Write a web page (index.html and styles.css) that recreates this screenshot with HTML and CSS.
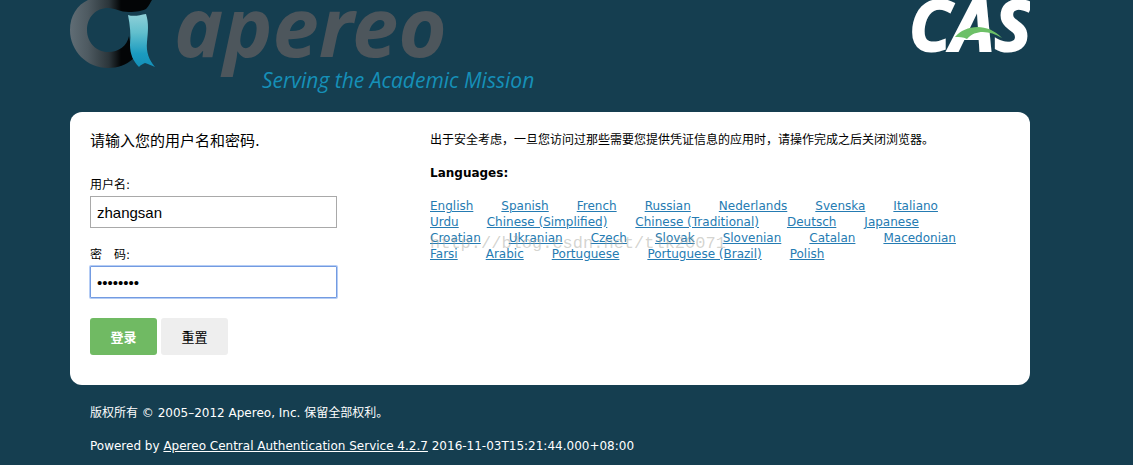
FILE: index.html
```
<!DOCTYPE html>
<html lang="zh-CN">

<head>
  <meta charset="UTF-8" />
  <meta name="viewport" content="width=device-width, initial-scale=1.0" />
  <title>CAS &#8211; Central Authentication Service</title>
  <link rel="stylesheet" href="styles.css">
</head>

<body>
  <div class="container">
    <header class="header">
      <svg class="logo" width="480" height="96" viewBox="0 0 480 96" role="img" aria-label="Apereo">
        <defs>
          <linearGradient id="ring" gradientUnits="userSpaceOnUse" x1="0" y1="0" x2="60" y2="0">
            <stop offset="0" stop-color="#606d75" />
            <stop offset="0.3" stop-color="#4e5a61" />
            <stop offset="0.65" stop-color="#2b353a" />
            <stop offset="0.85" stop-color="#030506" />
          </linearGradient>
          <linearGradient id="ribbon" x1="0" y1="0" x2="0" y2="1">
            <stop offset="0" stop-color="#8fd0d8" />
            <stop offset="0.35" stop-color="#62bfcd" />
            <stop offset="0.75" stop-color="#1b9bc0" />
            <stop offset="1" stop-color="#138fb8" />
          </linearGradient>
        </defs>
        <path fill="url(#ring)" d="M18 0C7 5 0 16 0 30C0 51 17 68 38 68C48 68 56 65 63 59L59 36C57 46 49 52 38 52C26 52 17 42 17 30C17 17 26 8 38 8C45 8 50 12 59 12C67 12 72 11 76 9C79 6 80 3 82 0Z" />
        <path fill="url(#ribbon)" d="M58 15C64 17 70 15 76 14C79 23 78 32 77 42C76 52 79 60 85 67C81 65 78 64 75 63C73 64 70 65 69 67C63 61 60 54 60 45C61 35 60 25 58 15Z" />
        <text class="logo-name" x="104" y="57">apereo</text>
        <text class="logo-tagline" x="192" y="88">Serving the Academic Mission</text>
      </svg>
      <svg class="cas" width="120" height="56" viewBox="0 0 120 56" role="img" aria-label="CAS">
        <text class="cas-name" x="-1" y="51">CAS</text>
        <path fill="#6dc067" d="M45 37C55 25 77 22 92 38C80 31 66 29 57 39C53 37 49 37 45 37Z" />
      </svg>
    </header>

    <main class="content">
      <form class="login">
        <h2 class="title">请输入您的用户名和密码.</h2>
        <div class="row">
          <label for="username">用户名:</label>
          <input type="text" class="input" id="username" value="zhangsan">
        </div>
        <div class="row">
          <label for="password">密&emsp;码:</label>
          <input type="password" class="input active" id="password" value="zhangsan">
        </div>
        <div class="buttons">
          <button type="submit" class="btn btn-submit">登录</button>
          <button type="reset" class="btn">重置</button>
        </div>
      </form>

      <div class="sidebar">
        <p class="notice">出于安全考虑，一旦您访问过那些需要您提供凭证信息的应用时，请操作完成之后关闭浏览器。</p>
        <h3 class="languages-title">Languages:</h3>
        <div class="languages">
          <div class="line"><a href="#">English</a><a href="#">Spanish</a><a href="#">French</a><a href="#">Russian</a><a href="#">Nederlands</a><a href="#">Svenska</a><a href="#">Italiano</a></div>
          <div class="line"><a href="#">Urdu</a><a href="#">Chinese (Simplified)</a><a href="#">Chinese (Traditional)</a><a href="#">Deutsch</a><a href="#">Japanese</a></div>
          <div class="line"><a href="#">Croatian</a><a href="#">Ukranian</a><a href="#">Czech</a><a href="#">Slovak</a><a href="#">Slovenian</a><a href="#">Catalan</a><a href="#">Macedonian</a></div>
          <div class="line"><a href="#">Farsi</a><a href="#">Arabic</a><a href="#">Portuguese</a><a href="#">Portuguese (Brazil)</a><a href="#">Polish</a></div>
          <span class="watermark">http://blog.csdn.net/tlk20071</span>
        </div>
      </div>
    </main>

    <footer class="footer">
      <p>版权所有 &copy; 2005&ndash;2012 Apereo, Inc. 保留全部权利。</p>
      <p>Powered by <a href="#">Apereo Central Authentication Service 4.2.7</a> 2016-11-03T15:21:44.000+08:00</p>
    </footer>
  </div>
</body>

</html>
```
FILE: styles.css
```
* {
  box-sizing: border-box;
}

body {
  margin: 0;
  padding: 0 103px 0 70px;
  background: #153e50;
  color: #000;
  font-family: "DejaVu Sans", "Noto Sans CJK SC", sans-serif;
  font-size: 12px;
  line-height: 16px;
}

p,
h2,
h3 {
  margin: 0;
}

.header {
  display: flex;
  justify-content: space-between;
  height: 112px;
}

.logo-name {
  font: italic 700 83px "Noto Sans", sans-serif;
  fill: #4d565c;
}

.logo-tagline {
  font: italic 400 21px "Open Sans", sans-serif;
  fill: #1590b8;
}

.cas-name {
  font: italic 700 69px "Open Sans", sans-serif;
  fill: #fff;
  stroke: #fff;
  stroke-width: 2px;
}

.content {
  display: flex;
  gap: 93px;
  padding: 20px 20px 30px;
  background: #fff;
  border-radius: 12px;
}

.login {
  width: 247px;
}

.title {
  margin-bottom: 26px;
  font-size: 15px;
  font-weight: 400;
  line-height: 18px;
}

.row {
  margin-bottom: 18px;
}

.row label {
  display: block;
  margin-bottom: 2px;
  line-height: 18px;
}

.input {
  display: block;
  width: 100%;
  height: 32px;
  padding: 0 6px;
  border: 1px solid #a9a9a9;
  background: #fff;
  font-family: "Liberation Sans", sans-serif;
  font-size: 15px;
}

.active {
  border-color: #739be1;
  border-radius: 1px;
  box-shadow: 0 0 0 1px #b5cdf5;
  outline: 0;
}

.buttons {
  display: flex;
  gap: 4px;
  padding-top: 2px;
}

.btn {
  width: 67px;
  height: 37px;
  padding: 0;
  border: 0;
  border-radius: 3px;
  background: #eee;
  color: #000;
  font-family: "Noto Sans CJK SC", sans-serif;
  font-size: 13px;
}

.btn-submit {
  background: #70ba63;
  color: #fff;
  font-weight: 700;
}

.sidebar {
  flex: 1;
}

.notice,
.languages-title {
  margin-bottom: 17px;
}

.languages-title {
  font-size: 12px;
}

.languages {
  position: relative;
}

.line {
  display: flex;
  flex-wrap: wrap;
  column-gap: 28px;
}

.languages a {
  color: #257bb2;
}

.watermark {
  position: absolute;
  top: 38px;
  left: 0;
  color: rgba(160, 160, 150, 0.45);
  font-family: "Liberation Mono", monospace;
  font-size: 17px;
  pointer-events: none;
}

.footer {
  padding: 20px 20px 0;
  color: #fff;
}

.footer p {
  margin-bottom: 17px;
}

.footer p:last-child {
  margin-bottom: 0;
}

.footer a {
  color: #fff;
}
```
